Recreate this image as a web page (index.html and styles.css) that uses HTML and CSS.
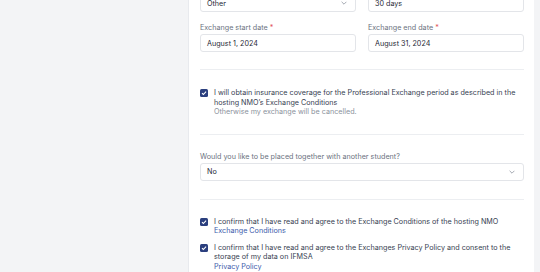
FILE: index.html
```html
<!DOCTYPE html>
<html lang="en">
<head>
  <meta charset="UTF-8" />
  <meta name="viewport" content="width=device-width, initial-scale=1.0" />
  <title>Exchange application</title>
  <link rel="stylesheet" href="styles.css">
</head>
<body>
  <div class="panel">
    <div class="row">
      <div class="field">
        <div class="input select">
          <span>Other</span>
          <svg class="chevron" viewBox="0 0 10 6"><path d="M1 1l4 4 4-4" /></svg>
        </div>
      </div>
      <div class="field">
        <div class="input"><span>30 days</span></div>
      </div>
    </div>

    <div class="row dates">
      <div class="field">
        <label>Exchange start date <span class="req">*</span></label>
        <div class="input"><span>August 1, 2024</span></div>
      </div>
      <div class="field">
        <label>Exchange end date <span class="req">*</span></label>
        <div class="input"><span>August 31, 2024</span></div>
      </div>
    </div>

    <hr class="divider">

    <div class="check-group">
      <div class="check-row">
        <span class="box"><svg viewBox="0 0 10 10"><path d="M2.5 5.2l1.7 1.7 3.4-3.6" /></svg></span>
        <div class="check-text">
          <p>I will obtain insurance coverage for the Professional Exchange period as described in the hosting NMO’s Exchange Conditions</p>
          <p class="muted">Otherwise my exchange will be cancelled.</p>
        </div>
      </div>
    </div>

    <hr class="divider">

    <div class="field single">
      <label>Would you like to be placed together with another student?</label>
      <div class="input select">
        <span>No</span>
        <svg class="chevron" viewBox="0 0 10 6"><path d="M1 1l4 4 4-4" /></svg>
      </div>
    </div>

    <hr class="divider wide">

    <div class="check-group agree">
      <div class="check-row">
        <span class="box"><svg viewBox="0 0 10 10"><path d="M2.5 5.2l1.7 1.7 3.4-3.6" /></svg></span>
        <div class="check-text">
          <p>I confirm that I have read and agree to the Exchange Conditions of the hosting NMO</p>
          <a href="#">Exchange Conditions</a>
        </div>
      </div>
      <div class="check-row">
        <span class="box"><svg viewBox="0 0 10 10"><path d="M2.5 5.2l1.7 1.7 3.4-3.6" /></svg></span>
        <div class="check-text">
          <p>I confirm that I have read and agree to the Exchanges Privacy Policy and consent to the storage of my data on IFMSA</p>
          <a href="#">Privacy Policy</a>
        </div>
      </div>
    </div>
  </div>
</body>
</html>
```

FILE: styles.css
```css
body {
  margin: 0;
  background: #f3f4f6;
  font-family: Inter, "Noto Sans", sans-serif;
  font-size: 7.2px;
  color: #374151;
  height: 272px;
  overflow: hidden;
}

.panel {
  margin: -6px 0 0 188px;
  width: 346px;
  box-sizing: border-box;
  background: white;
  border-left: 1px solid #e8eaee;
  padding: 0 10px 20px 11px;
}

.row {
  display: flex;
  gap: 12px;
}

.row.dates {
  margin-top: 11px;
}

.field {
  flex: 1;
  display: flex;
  flex-direction: column;
}

label {
  color: #6b7280;
  line-height: 9px;
  margin-bottom: 2px;
}

.req {
  color: #e0484f;
}

.input {
  height: 18px;
  box-sizing: border-box;
  border: 1px solid #e3e5e9;
  border-radius: 3px;
  display: flex;
  align-items: center;
  justify-content: space-between;
  padding: 0 8px 0 6px;
  color: #1f2937;
}

.chevron {
  width: 6px;
  height: 4px;
  fill: none;
  stroke: #8b919c;
  stroke-width: 1.3;
}

.divider {
  border: none;
  border-top: 1px solid #eceef1;
  margin: 17px 0 0;
}

.divider.wide {
  margin-top: 18px;
}

.check-group {
  padding-top: 18px;
}

.check-row {
  display: flex;
  gap: 6px;
}

.agree {
  padding-top: 17px;
}

.agree .check-row + .check-row {
  margin-top: 7px;
}

.box {
  width: 8px;
  height: 8px;
  flex: none;
  margin-top: 1px;
  border-radius: 1.5px;
  background: #2b3f7e;
  display: flex;
}

.box svg {
  width: 8px;
  height: 8px;
  fill: none;
  stroke: white;
  stroke-width: 1.4;
}

.check-text {
  line-height: 9.5px;
}

.check-text p {
  margin: 0;
}

.muted {
  color: #8b929c;
}

.check-text a {
  display: block;
  color: #3d5bab;
  text-decoration: none;
}

.field.single {
  margin-top: 17px;
}
```
